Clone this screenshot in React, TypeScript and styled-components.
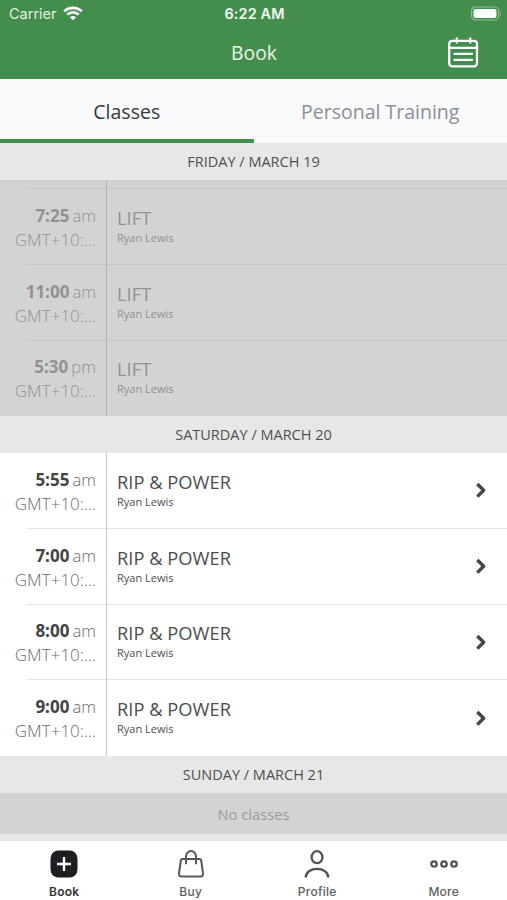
import React from 'react';
import styled, { createGlobalStyle } from 'styled-components';

const Global = createGlobalStyle`
  * { box-sizing: border-box; }
  body { margin: 0; background: #fff; }
`;

const Screen = styled.div`
  width: 507px;
  height: 900px;
  overflow: hidden;
  display: flex;
  flex-direction: column;
  font-family: 'Open Sans', sans-serif;
  background: #e7e7e7;
`;

const Header = styled.header`
  height: 79px;
  flex: none;
  background: #448e4d;
  color: #f3faf3;
`;

const StatusBar = styled.div`
  display: grid;
  grid-template-columns: 1fr auto 1fr;
  align-items: center;
  height: 27px;
  padding: 0 7px 0 9px;
  font: 400 14.5px/27px Inter, sans-serif;
`;

const Carrier = styled.div`
  display: flex;
  align-items: center;
  gap: 6px;
  color: #e2f0e3;
`;

const Clock = styled.div`
  font-weight: 600;
  font-size: 14.4px;
  letter-spacing: 0.15px;
`;

const Battery = styled.svg`
  justify-self: end;
  margin-right: -3px;
  margin-top: -1px;
`;

const NavBar = styled.div`
  display: grid;
  grid-template-columns: 1fr auto 1fr;
  align-items: center;
  height: 52px;
  padding-right: 28px;
  padding-left: 29px;
`;

const Title = styled.h1`
  grid-column: 2;
  margin: 0;
  font-size: 19.3px;
  font-weight: 400;
  line-height: 26px;
  color: #e9f5ea;
`;

const CalendarIcon = styled.svg`
  justify-self: end;
  margin-bottom: 2px;
`;

const Tabs = styled.div`
  display: flex;
  flex: none;
  height: 64px;
  background: #f9fafc;
`;

const Tab = styled.div<{ $active?: boolean }>`
  flex: 1;
  height: 64px;
  border-bottom: 4px solid ${p => (p.$active ? '#448e4d' : 'transparent')};
  text-align: center;
  font-size: 19.5px;
  line-height: 65px;
  color: ${p => (p.$active ? '#38393b' : '#8e8f95')};
`;

const DayHeader = styled.h2`
  flex: none;
  height: 36.6px;
  margin: 0;
  background: #e7e7e7;
  text-align: center;
  font-size: 14.5px;
  font-weight: 400;
  line-height: 37px;
  color: #505050;
`;

const DayList = styled.div<{ $past?: boolean }>`
  flex: none;
  background: ${p => (p.$past ? '#d3d3d3' : '#fff')};
  --strong: ${p => (p.$past ? '#929292' : '#444')};
  --light: ${p => (p.$past ? '#929292' : '#6b6b6b')};
  --name: ${p => (p.$past ? '#929292' : '#4d4d4d')};
  --rule: ${p => (p.$past ? '#c5c5c5' : '#e7e7e7')};
  --column: ${p => (p.$past ? '#b3b3b3' : '#c9c9c9')};
`;

const TimeCell = styled.div`
  grid-column: 1 / 3;
  display: flex;
  flex-direction: column;
  align-items: flex-end;
  padding: 14.8px 10px 0 0;
  border-right: 1px solid var(--column);
  background: linear-gradient(var(--rule), var(--rule)) right bottom / 80px 1px no-repeat;
`;

const ClassCell = styled.div`
  display: grid;
  grid-template-columns: 1fr 12px;
  align-items: center;
  padding: 0 20px 0 10px;
  border-bottom: 1px solid var(--rule);
`;

const Row = styled.div<{ $cut?: boolean }>`
  display: grid;
  grid-template-columns: 26px 81px 1fr;
  height: ${p => (p.$cut ? '9.4px' : '75.8px')};

  ${p => p.$cut && `${TimeCell} { padding-top: 0; }`}

  &:last-child ${TimeCell} {
    background: none;
  }

  &:last-child ${ClassCell} {
    border-bottom-color: transparent;
  }
`;

const Time = styled.div`
  display: flex;
  gap: 3px;
  height: 24px;
  font-size: 16.7px;
  line-height: 24px;
  font-weight: 300;
  color: var(--light);
`;

const Hour = styled.b`
  font-weight: 700;
  font-size: 17px;
  color: var(--strong);
`;

const Zone = styled.div`
  font-size: 17px;
  font-weight: 300;
  line-height: 23.5px;
  color: var(--light);
`;

const ClassInfo = styled.div`
  padding-bottom: 1px;
`;

const ClassName = styled.div`
  font-size: 18.3px;
  line-height: 24px;
  letter-spacing: 0.02px;
  color: var(--name);
`;

const Teacher = styled.div`
  font-size: 11px;
  line-height: 16px;
  color: var(--name);
`;

const Empty = styled.div`
  flex: none;
  height: 41.5px;
  background: #d3d3d3;
  text-align: center;
  font-size: 14.7px;
  line-height: 43px;
  color: #9c9c9c;
`;

const TabBar = styled.nav`
  display: grid;
  grid-template-columns: repeat(4, 126.5px);
  flex: none;
  height: 59px;
  margin-top: auto;
  padding-left: 1px;
  background: #fff;
`;

const TabItem = styled.div<{ $active?: boolean }>`
  display: flex;
  flex-direction: column;
  align-items: center;
  padding-top: 7.5px;
  gap: 5px;
  font: ${p => (p.$active ? 600 : 500)} 12px/16px Inter, sans-serif;
  letter-spacing: 0.25px;
  color: ${p => (p.$active ? '#303134' : '#5c5e61')};
`;

const Wifi = () => (
  <svg width="20" height="15" viewBox="0 0 20 15" fill="none" stroke="#fff" strokeWidth="2.7">
    <path d="M1.200 5.300C6 .7 14 .7 18.800 5.300" />
    <path d="M4.300 8.600C7.500 5.500 12.500 5.500 15.700 8.600" />
    <path d="M10 14.200 6.900 11.200Q10 8.700 13.100 11.200Z" fill="#fff" stroke="none" />
  </svg>
);

const Chevron = () => (
  <svg width="12" height="18" viewBox="0 0 12 18" fill="none" stroke="#464646" strokeWidth="3.4" strokeLinejoin="round">
    <path d="M2.300 3 8.700 9.300 2.300 15.600" />
  </svg>
);

type Session = { time: string; half: string; name: string };

const friday: Session[] = [
  { time: '7:25', half: 'am', name: 'LIFT' },
  { time: '11:00', half: 'am', name: 'LIFT' },
  { time: '5:30', half: 'pm', name: 'LIFT' },
];

const saturday: Session[] = ['5:55', '7:00', '8:00', '9:00'].map(time => ({
  time,
  half: 'am',
  name: 'RIP & POWER',
}));

const Sessions = ({ items, bookable }: { items: Session[]; bookable?: boolean }) => (
  <>
    {items.map(s => (
      <Row key={s.time}>
        <TimeCell>
          <Time>
            <Hour>{s.time}</Hour>
            <span>{s.half}</span>
          </Time>
          <Zone>GMT+10:...</Zone>
        </TimeCell>
        <ClassCell>
          <ClassInfo>
            <ClassName>{s.name}</ClassName>
            <Teacher>Ryan Lewis</Teacher>
          </ClassInfo>
          {bookable && <Chevron />}
        </ClassCell>
      </Row>
    ))}
  </>
);

export default function App() {
  return (
    <Screen>
      <Global />
      <Header>
        <StatusBar>
          <Carrier>
            Carrier
            <Wifi />
          </Carrier>
          <Clock>6:22 AM</Clock>
          <Battery width="32" height="15" viewBox="0 0 32 15">
            <rect x="0.600" y="1" width="27" height="13" rx="4" fill="none" stroke="#8fbd95" strokeWidth="1.200" />
            <rect x="2.500" y="3" width="23" height="9" rx="2.300" fill="#fff" />
            <path d="M29 5.200Q31 7.500 29 9.800Z" fill="#8fbd95" />
          </Battery>
        </StatusBar>
        <NavBar>
          <Title>Book</Title>
          <CalendarIcon width="32" height="32" viewBox="0 0 32 32" fill="none" stroke="#fff" strokeWidth="2.300" strokeLinecap="round">
            <rect x="2.200" y="4.800" width="27.800" height="25.500" rx="3" />
            <path d="M2.500 11.800H29.500M9.800 2.500V6.500M23.300 2.500V6.500M7.500 17.800H25M7.500 23.800H25" />
          </CalendarIcon>
        </NavBar>
      </Header>
      <Tabs>
        <Tab $active>Classes</Tab>
        <Tab>Personal Training</Tab>
      </Tabs>
      <DayHeader>FRIDAY / MARCH 19</DayHeader>
      <DayList $past>
        <Row $cut>
          <TimeCell />
          <ClassCell />
        </Row>
        <Sessions items={friday} />
      </DayList>
      <DayHeader>SATURDAY / MARCH 20</DayHeader>
      <DayList>
        <Sessions items={saturday} bookable />
      </DayList>
      <DayHeader>SUNDAY / MARCH 21</DayHeader>
      <Empty>No classes</Empty>
      <TabBar>
        <TabItem $active>
          <svg width="30" height="30" viewBox="0 0 30 30">
            <rect x="1.500" y="1.500" width="27" height="27" rx="8" fill="#1d1e22" />
            <path d="M15 8V22M8 15H22" stroke="#fff" strokeWidth="2.400" />
          </svg>
          Book
        </TabItem>
        <TabItem>
          <svg width="30" height="30" viewBox="0 0 30 30" fill="none" stroke="#55585b" strokeWidth="2" strokeLinejoin="round" strokeLinecap="round">
            <path d="M6.500 10H23.500Q25 10 25.200 11.500L27 24.500Q27.200 27.500 24.500 27.500H5.500Q2.800 27.500 3 24.500L4.800 11.500Q5 10 6.500 10Z" />
            <path d="M10 14.500V7.500A5 5.500 0 0 1 20 7.500V14.500" />
          </svg>
          Buy
        </TabItem>
        <TabItem>
          <svg width="30" height="30" viewBox="0 0 30 30" fill="none" stroke="#505356" strokeWidth="2.300">
            <ellipse cx="15" cy="8.200" rx="5.400" ry="6" />
            <path d="M3.700 28.500C4 17 26 17 26.300 28.500" />
          </svg>
          Profile
        </TabItem>
        <TabItem>
          <svg width="30" height="30" viewBox="0 0 30 30" fill="none" stroke="#505356" strokeWidth="2.300">
            <circle cx="5" cy="15" r="2.700" />
            <circle cx="15" cy="15" r="2.700" />
            <circle cx="25" cy="15" r="2.700" />
          </svg>
          More
        </TabItem>
      </TabBar>
    </Screen>
  );
}
